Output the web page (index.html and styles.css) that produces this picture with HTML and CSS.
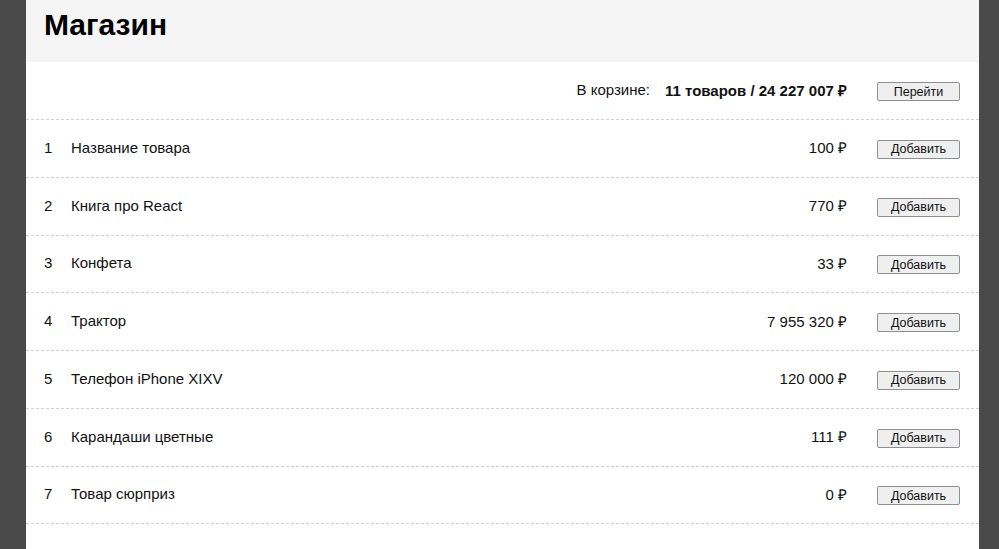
FILE: index.html
```html
<!DOCTYPE html>
<html lang="ru">
<head>
<meta charset="utf-8">
<title>Магазин</title>
<link rel="stylesheet" href="styles.css">
</head>
<body>
<div class="page">
  <header class="header">
    <h1 class="title">Магазин</h1>
  </header>
  <div class="cart">
    <span class="cart-label">В корзине:</span>
    <span class="cart-total">11 товаров / 24&nbsp;227&nbsp;007&nbsp;₽</span>
    <button class="btn">Перейти</button>
  </div>
  <ul class="list">
    <li class="item"><span class="num">1</span><span class="name">Название товара</span><span class="price">100&nbsp;₽</span><button class="btn">Добавить</button></li>
    <li class="item"><span class="num">2</span><span class="name">Книга про React</span><span class="price">770&nbsp;₽</span><button class="btn">Добавить</button></li>
    <li class="item"><span class="num">3</span><span class="name">Конфета</span><span class="price">33&nbsp;₽</span><button class="btn">Добавить</button></li>
    <li class="item"><span class="num">4</span><span class="name">Трактор</span><span class="price">7&nbsp;955&nbsp;320&nbsp;₽</span><button class="btn">Добавить</button></li>
    <li class="item"><span class="num">5</span><span class="name">Телефон iPhone XIXV</span><span class="price">120&nbsp;000&nbsp;₽</span><button class="btn">Добавить</button></li>
    <li class="item"><span class="num">6</span><span class="name">Карандаши цветные</span><span class="price">111&nbsp;₽</span><button class="btn">Добавить</button></li>
    <li class="item"><span class="num">7</span><span class="name">Товар сюрприз</span><span class="price">0&nbsp;₽</span><button class="btn">Добавить</button></li>
  </ul>
</div>
</body>
</html>
```
FILE: styles.css
```css
html, body {
  margin: 0;
  padding: 0;
}
body {
  background: #4a4a4a;
  font-family: "Liberation Sans", Arial, sans-serif;
  font-size: 15px;
  color: #111;
  padding-left: 26px;
  height: 549px;
  overflow: hidden;
}
.page {
  width: 953px;
  background: #fff;
  min-height: 549px;
}
.header {
  background: #f5f5f5;
  height: 62px;
  padding: 0 18px;
  display: flex;
  align-items: center;
}
.title {
  margin: 0;
  font-size: 30px;
  font-weight: bold;
  color: #000;
  position: relative;
  top: -6px;
}
.cart {
  display: flex;
  align-items: center;
  justify-content: flex-end;
  height: 55px;
  padding: 0 19px 2px 18px;
  border-bottom: 1px dashed #d0d0d0;
}
.cart-label {
  margin-right: 15px;
}
.cart-total {
  font-weight: bold;
  margin-right: 30px;
}
.list {
  list-style: none;
  margin: 0;
  padding: 0;
}
.item {
  display: flex;
  align-items: center;
  height: 54.75px;
  padding: 0 19px 2px 18px;
  border-bottom: 1px dashed #d0d0d0;
}
.num {
  width: 27px;
}
.name {
  flex: 1;
}
.price {
  margin-right: 30px;
}
.btn {
  width: 83px;
  height: 19px;
  padding: 0;
  font-family: "Liberation Sans", Arial, sans-serif;
  font-size: 12.5px;
  color: #111;
  background: #efefef;
  border: 1px solid #8f8f8f;
  border-radius: 2px;
  position: relative;
  top: 2px;
}
```
